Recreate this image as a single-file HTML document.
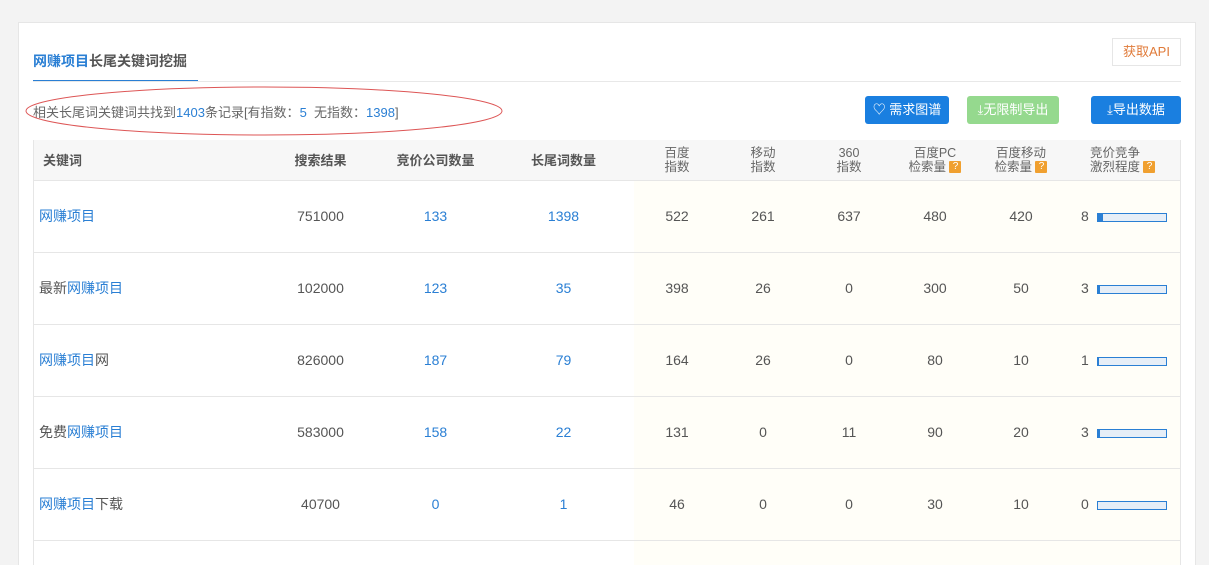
<!DOCTYPE html>
<html><head><meta charset="utf-8"><style>
*{margin:0;padding:0;box-sizing:border-box}
html,body{width:1209px;height:565px;overflow:hidden}
body{background:#f3f3f3;font-family:"Liberation Sans","Noto Sans CJK SC",sans-serif;font-size:13px;color:#555;position:relative}
.card{position:absolute;left:18px;top:22px;width:1178px;height:543px;background:#fff;border:1px solid #e6e6e6;border-bottom:none}
.abs{position:absolute}
.blue{color:#2a7fd4}
.btn{position:absolute;top:96px;height:28px;border-radius:3px;color:#fff;font-size:13px;line-height:28px;text-align:center}
table{position:absolute;left:33px;top:140px;width:1148px;border-collapse:collapse;table-layout:fixed}
th{height:40px;background:#f7f7f7;font-weight:bold;color:#555;font-size:13px;border-bottom:1px solid #e6e6e6}
th.s{font-weight:normal;font-size:12.5px;line-height:14px;color:#666}
td{height:72px;text-align:center;border-bottom:1px solid #e6e6e6;color:#555;font-size:14px}
td.y{background:#fffef8}
.q{display:inline-block;width:12px;height:12px;background:#f0a030;color:#fff;font-size:10px;line-height:12px;text-align:center;vertical-align:middle;border-radius:1px}
.bar{display:inline-block;width:70px;height:9px;border:1px solid #2a7fd4;background:#e6eef7;vertical-align:middle;margin-left:8px;position:relative}
.bar i{position:absolute;left:0;top:0;bottom:0;background:#2a7fd4}
</style></head><body>
<div class="card"></div>
<div class="abs" style="left:33px;top:51px;font-size:14px;font-weight:bold;color:#555"><span class="blue">网赚项目</span>长尾关键词挖掘</div>
<div class="abs" style="left:33px;top:80px;width:165px;height:2px;background:#2a7fd4"></div>
<div class="abs" style="left:33px;top:81px;width:1148px;height:1px;background:#e8e8e8"></div>
<div class="abs" style="left:1112px;top:38px;width:69px;height:28px;border:1px solid #e6e6e6;color:#e07b3a;line-height:26px;text-align:center;font-size:13px">获取API</div>
<div class="abs" style="left:33px;top:102px;font-size:13px;color:#666">相关长尾词关键词共找到<span class="blue">1403</span>条记录[有指数：<span class="blue">5</span>&nbsp; 无指数：<span class="blue">1398</span>]</div>
<svg class="abs" style="left:24px;top:84px" width="482" height="54"><ellipse cx="240" cy="27" rx="238" ry="24" fill="none" stroke="#d55" stroke-width="1"/></svg>
<div class="btn" style="left:865px;width:84px;background:#1a7fe0">&#9825; 需求图谱</div>
<div class="btn" style="left:967px;width:92px;background:#95d98e">⤓无限制导出</div>
<div class="btn" style="left:1091px;width:90px;background:#1a7fe0">⤓导出数据</div>
<table>
<colgroup><col style="width:240px"><col style="width:95px"><col style="width:135px"><col style="width:131px"><col style="width:86px"><col style="width:86px"><col style="width:86px"><col style="width:86px"><col style="width:86px"><col style="width:117px"></colgroup>
<tr><th style="text-align:left;padding-left:10px">关键词</th><th>搜索结果</th><th>竞价公司数量</th><th style="padding-right:10px">长尾词数量</th><th class="s">百度<br>指数</th><th class="s">移动<br>指数</th><th class="s">360<br>指数</th><th class="s">百度PC<br>检索量 <span class="q">?</span></th><th class="s">百度移动<br>检索量 <span class="q">?</span></th><th class="s" style="text-align:left;padding-left:26px">竞价竞争<br>激烈程度 <span class="q">?</span></th></tr>
<tr><td style="text-align:left;padding-left:6px"><span class="blue">网赚项目</span></td><td>751000</td><td class="blue">133</td><td class="blue" style="padding-right:10px">1398</td><td class="y">522</td><td class="y">261</td><td class="y">637</td><td class="y">480</td><td class="y">420</td><td class="y" style="text-align:left;padding-left:17px">8<span class="bar"><i style="width:5px"></i></span></td></tr>
<tr><td style="text-align:left;padding-left:6px">最新<span class="blue">网赚项目</span></td><td>102000</td><td class="blue">123</td><td class="blue" style="padding-right:10px">35</td><td class="y">398</td><td class="y">26</td><td class="y">0</td><td class="y">300</td><td class="y">50</td><td class="y" style="text-align:left;padding-left:17px">3<span class="bar"><i style="width:2px"></i></span></td></tr>
<tr><td style="text-align:left;padding-left:6px"><span class="blue">网赚项目</span>网</td><td>826000</td><td class="blue">187</td><td class="blue" style="padding-right:10px">79</td><td class="y">164</td><td class="y">26</td><td class="y">0</td><td class="y">80</td><td class="y">10</td><td class="y" style="text-align:left;padding-left:17px">1<span class="bar"><i style="width:1px"></i></span></td></tr>
<tr><td style="text-align:left;padding-left:6px">免费<span class="blue">网赚项目</span></td><td>583000</td><td class="blue">158</td><td class="blue" style="padding-right:10px">22</td><td class="y">131</td><td class="y">0</td><td class="y">11</td><td class="y">90</td><td class="y">20</td><td class="y" style="text-align:left;padding-left:17px">3<span class="bar"><i style="width:2px"></i></span></td></tr>
<tr><td style="text-align:left;padding-left:6px"><span class="blue">网赚项目</span>下载</td><td>40700</td><td class="blue">0</td><td class="blue" style="padding-right:10px">1</td><td class="y">46</td><td class="y">0</td><td class="y">0</td><td class="y">30</td><td class="y">10</td><td class="y" style="text-align:left;padding-left:17px">0<span class="bar"></span></td></tr>
</table>
<div class="abs" style="left:634px;top:541px;width:547px;height:24px;background:#fffef8"></div>
<div class="abs" style="left:33px;top:140px;width:1px;height:425px;background:#e6e6e6"></div>
<div class="abs" style="left:1180px;top:140px;width:1px;height:425px;background:#e6e6e6"></div>
</body></html>
